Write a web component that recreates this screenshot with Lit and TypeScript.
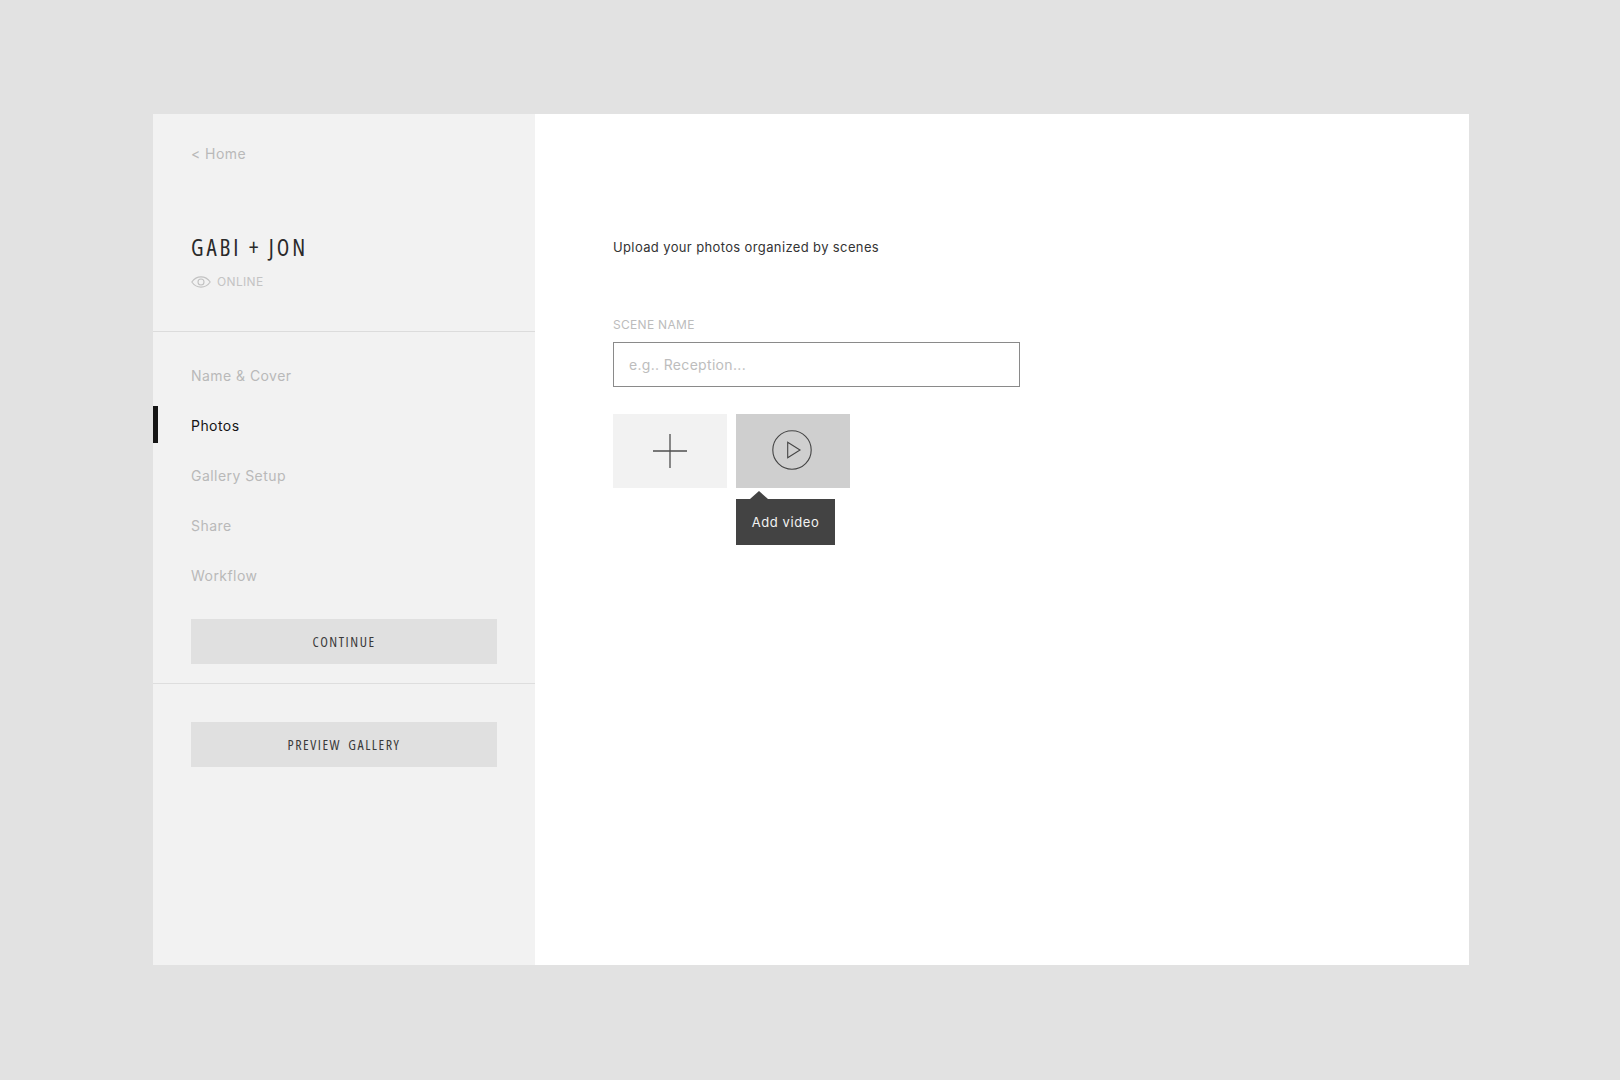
import { LitElement, html, css } from "lit";
import { customElement } from "lit/decorators.js";

@customElement("app-root")
export class AppRoot extends LitElement {
  static styles = css`
    :host { display: block; height: 1080px; background: #e2e2e2; padding: 114px 151px 0 153px; box-sizing: border-box; font-family: "Inter", "Liberation Sans", sans-serif; color: #b9b9b9; }
    .panel { display: flex; width: 1316px; height: 851px; background: #fff; }
    .side { width: 382px; flex: none; background: #f2f2f2; display: flex; flex-direction: column; }
    .head { height: 218px; border-bottom: 1px solid #dcdcdc; padding: 30px 38px 0; box-sizing: border-box; display: flex; flex-direction: column; }
    .home { font-size: 14px; line-height: 20px; letter-spacing: .45px; }
    .title { margin-top: 69px; font-family: "Open Sans", sans-serif; font-stretch: 85%; font-weight: 500; font-size: 23px; line-height: 28px; letter-spacing: 2.95px; color: #2a2a2a; }
    .status { margin-top: 13px; display: flex; align-items: center; gap: 6px; font-size: 12px; line-height: 16px; letter-spacing: .35px; color: #c4c4c4; }
    nav { display: flex; flex-direction: column; padding-top: 18px; }
    .item { height: 50px; padding-left: 38px; display: flex; align-items: center; font-size: 14px; letter-spacing: .45px; position: relative; }
    .item.active { color: #151515; }
    .item.active::before { content: ""; position: absolute; left: 0; top: 6px; width: 5px; height: 37px; background: #151515; }
    .action { margin: 0 38px; width: 306px; height: 45px; background: #e0e0e0; display: flex; align-items: center; justify-content: center; font-family: "Open Sans", sans-serif; font-stretch: 85%; font-size: 14px; letter-spacing: 1.55px; word-spacing: 3px; color: #3a3a3a; }
    .continue { margin-top: 19px; }
    .rule { height: 1px; margin-top: 19px; background: #dedede; }
    .preview { margin-top: 38px; }
    .main { flex: 1; padding: 123px 0 0 78px; display: flex; flex-direction: column; align-items: flex-start; }
    .intro { font-size: 13px; line-height: 20px; letter-spacing: .37px; color: #333; }
    .label { margin-top: 60px; font-size: 12px; line-height: 16px; letter-spacing: .3px; color: #bcbcbc; }
    .field { margin-top: 9px; width: 407px; height: 45px; box-sizing: border-box; border: 1px solid #8a8a8a; padding-left: 15px; display: flex; align-items: center; font-size: 14px; letter-spacing: .32px; color: #bdbdbd; }
    .tiles { margin-top: 27px; display: flex; gap: 9px; }
    .tile { width: 114px; height: 74px; display: flex; align-items: center; justify-content: center; position: relative; }
    .plus { background: #f2f2f2; }
    .video { background: #cfcfcf; }
    .tip { position: absolute; left: 0; top: 85px; width: 99px; height: 46px; background: #434343; color: #f2f2f2; display: flex; align-items: center; justify-content: center; font-size: 13px; letter-spacing: .6px; }
    .tip::before { content: ""; position: absolute; left: 14px; top: -8px; border-left: 9px solid transparent; border-right: 9px solid transparent; border-bottom: 8px solid #434343; }
    .shift { margin: -2px 0 0 -2px; }
    svg { display: block; }
  `;

  render() {
    const items = ["Name & Cover", "Photos", "Gallery Setup", "Share", "Workflow"];
    return html`
      <div class="panel">
        <aside class="side">
          <div class="head">
            <div class="home">&lt; Home</div>
            <div class="title">GABI + JON</div>
            <div class="status">
              <svg width="20" height="12" viewBox="0 0 20 12" fill="none" stroke="#c2c2c2" stroke-width="1.1">
                <path d="M.8 6C3.2 2.6 6.4.9 10 .9s6.800 1.700 9.200 5.100C16.800 9.400 13.600 11.100 10 11.100S3.200 9.400.8 6Z" />
                <circle cx="10" cy="6" r="3" />
              </svg>
              <span>ONLINE</span>
            </div>
          </div>
          <nav>
            ${items.map((i) => html`<div class="item ${i === "Photos" ? "active" : ""}">${i}</div>`)}
          </nav>
          <div class="action continue">CONTINUE</div>
          <div class="rule"></div>
          <div class="action preview">PREVIEW GALLERY</div>
        </aside>
        <main class="main">
          <div class="intro">Upload your photos organized by scenes</div>
          <div class="label">SCENE NAME</div>
          <div class="field">e.g.. Reception...</div>
          <div class="tiles">
            <div class="tile plus">
              <svg width="36" height="36" viewBox="0 0 36 36" stroke="#4f4f4f" stroke-width="1.3"><path d="M18 1v34M1 18h34" /></svg>
            </div>
            <div class="tile video">
              <svg class="shift" width="42" height="42" viewBox="0 0 42 42" fill="none" stroke="#444" stroke-width="1.1">
                <circle cx="21" cy="21" r="19.200" />
                <path d="M16.700 13.200v15.600L29 21Z" />
              </svg>
              <div class="tip">Add video</div>
            </div>
          </div>
        </main>
      </div>
    `;
  }
}
